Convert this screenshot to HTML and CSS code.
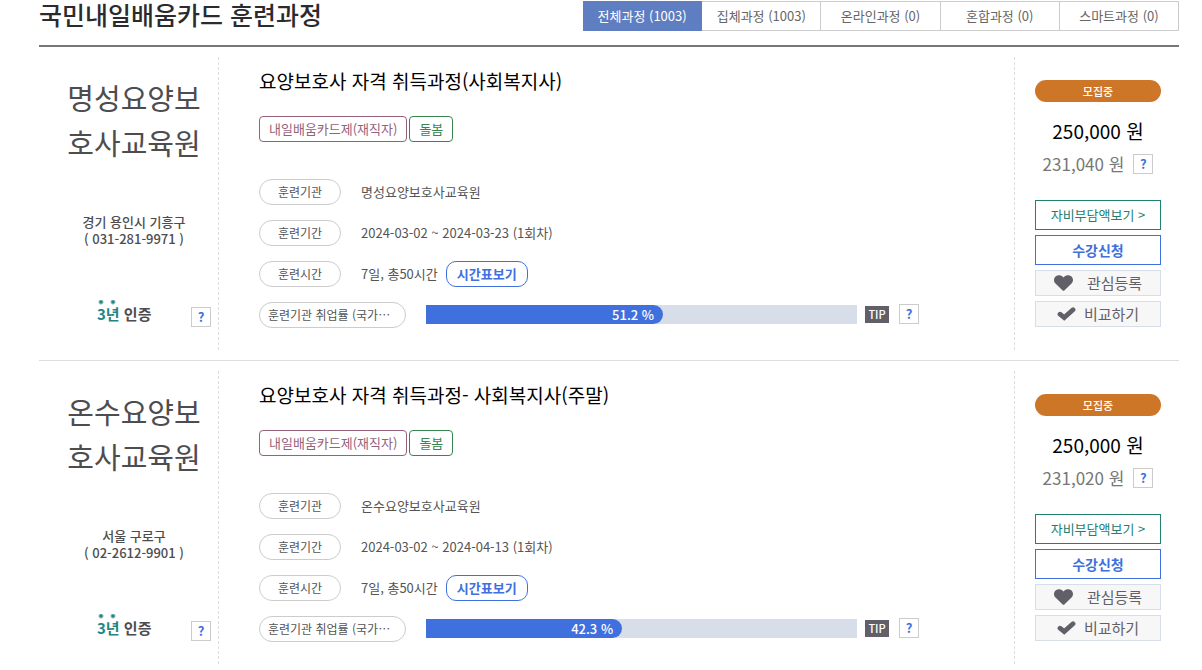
FILE: index.html
```html
<!DOCTYPE html>
<html lang="ko">
<head>
<meta charset="utf-8">
<meta name="viewport" content="width=device-width, initial-scale=1">
<title>국민내일배움카드 훈련과정</title>
<link rel="stylesheet" href="styles.css">
</head>
<body>
<svg class="sprite" aria-hidden="true">
  <symbol id="heart" viewBox="0 24 512 464" preserveAspectRatio="none"><path d="M462.3 62.6C407.5 15.9 326 24.3 275.7 76.2L256 96.5l-19.7-20.3C186.1 24.3 104.5 15.9 49.7 62.6c-62.8 53.6-66.1 149.8-9.9 207.9l193.5 199.8c12.5 12.9 32.8 12.9 45.3 0l193.5-199.8c56.3-58.1 53-154.3-9.8-207.9z"/></symbol>
  <symbol id="check" viewBox="0 0 19 14"><path d="M3 7.2L7.2 10.6L16 2.8" fill="none" stroke="#616068" stroke-width="4.8" stroke-linecap="round" stroke-linejoin="miter"/></symbol>
</svg>
<main class="page">
  <header class="page-head">
    <h1 class="page-title">국민내일배움카드 훈련과정</h1>
    <nav class="tabs">
      <a class="tab tab-on" href="#">전체과정 (1003)</a>
      <a class="tab" href="#">집체과정 (1003)</a>
      <a class="tab" href="#">온라인과정 (0)</a>
      <a class="tab" href="#">혼합과정 (0)</a>
      <a class="tab" href="#">스마트과정 (0)</a>
    </nav>
  </header>

  <article class="course">
    <section class="school">
      <p class="school-name">명성요양보호사교육원</p>
      <p class="school-place">경기 용인시 기흥구<br>( 031-281-9971 )</p>
      <div class="cert">
        <p class="cert-text"><span class="cert-years">3년</span> 인증</p>
        <button class="help" type="button">?</button>
      </div>
    </section>
    <section class="detail">
      <h2 class="course-title"><a href="#">요양보호사 자격 취득과정(사회복지사)</a></h2>
      <div class="tags"><span class="tag tag-card">내일배움카드제(재직자)</span><span class="tag tag-care">돌봄</span></div>
      <dl class="facts">
        <div class="fact"><dt class="chip">훈련기관</dt><dd>명성요양보호사교육원</dd></div>
        <div class="fact"><dt class="chip">훈련기간</dt><dd>2024-03-02 ~ 2024-03-23 (1회차)</dd></div>
        <div class="fact"><dt class="chip">훈련시간</dt><dd>7일, 총50시간</dd><dd><button class="timetable" type="button">시간표보기</button></dd></div>
        <div class="fact"><dt class="chip chip-wide">훈련기관 취업률 (국가…</dt>
          <dd class="rate"><div class="bar"><div class="bar-fill" style="width:55%">51.2 %</div></div><span class="tip">TIP</span><button class="help" type="button">?</button></dd></div>
      </dl>
    </section>
    <section class="apply">
      <span class="status">모집중</span>
      <p class="price">250,000 원</p>
      <p class="own-price">231,040 원 <button class="help" type="button">?</button></p>
      <div class="actions">
        <button class="action action-cost" type="button">자비부담액보기 &gt;</button>
        <button class="action action-apply" type="button">수강신청</button>
        <button class="action action-sub" type="button"><svg class="icon-heart"><use href="#heart"/></svg>관심등록</button>
        <button class="action action-sub" type="button"><svg class="icon-check"><use href="#check"/></svg>비교하기</button>
      </div>
    </section>
  </article>

  <article class="course">
    <section class="school">
      <p class="school-name">온수요양보호사교육원</p>
      <p class="school-place">서울 구로구<br>( 02-2612-9901 )</p>
      <div class="cert">
        <p class="cert-text"><span class="cert-years">3년</span> 인증</p>
        <button class="help" type="button">?</button>
      </div>
    </section>
    <section class="detail">
      <h2 class="course-title"><a href="#">요양보호사 자격 취득과정- 사회복지사(주말)</a></h2>
      <div class="tags"><span class="tag tag-card">내일배움카드제(재직자)</span><span class="tag tag-care">돌봄</span></div>
      <dl class="facts">
        <div class="fact"><dt class="chip">훈련기관</dt><dd>온수요양보호사교육원</dd></div>
        <div class="fact"><dt class="chip">훈련기간</dt><dd>2024-03-02 ~ 2024-04-13 (1회차)</dd></div>
        <div class="fact"><dt class="chip">훈련시간</dt><dd>7일, 총50시간</dd><dd><button class="timetable" type="button">시간표보기</button></dd></div>
        <div class="fact"><dt class="chip chip-wide">훈련기관 취업률 (국가…</dt>
          <dd class="rate"><div class="bar"><div class="bar-fill" style="width:45.5%">42.3 %</div></div><span class="tip">TIP</span><button class="help" type="button">?</button></dd></div>
      </dl>
    </section>
    <section class="apply">
      <span class="status">모집중</span>
      <p class="price">250,000 원</p>
      <p class="own-price">231,020 원 <button class="help" type="button">?</button></p>
      <div class="actions">
        <button class="action action-cost" type="button">자비부담액보기 &gt;</button>
        <button class="action action-apply" type="button">수강신청</button>
        <button class="action action-sub" type="button"><svg class="icon-heart"><use href="#heart"/></svg>관심등록</button>
        <button class="action action-sub" type="button"><svg class="icon-check"><use href="#check"/></svg>비교하기</button>
      </div>
    </section>
  </article>
</main>
</body>
</html>
```

FILE: styles.css
```css
* {
  box-sizing: border-box;
  margin: 0;
  padding: 0;
}

body {
  background: #fff;
  color: #555;
  font: 400 13px/16px "Noto Sans CJK KR", "Noto Sans", sans-serif;
}

button {
  font: inherit;
  cursor: pointer;
}

a {
  color: inherit;
  text-decoration: none;
}

.sprite {
  display: none;
}

.page {
  padding: 0 23px 0 39px;
}

.page-head {
  display: flex;
  justify-content: space-between;
  align-items: flex-start;
  padding: 1px 0 14px;
  border-bottom: 2px solid #777;
}

.page-title {
  color: #2b2b2f;
  font-size: 25px;
  font-weight: 500;
  line-height: 26px;
}

.tabs {
  display: flex;
  width: 596px;
}

.tab {
  flex: 1;
  border: 1px solid #ccc;
  border-left-width: 0;
  color: #666;
  line-height: 28px;
  text-align: center;
  white-space: nowrap;
}

.tab-on {
  border-color: #5f7dc1;
  background: #5f7dc1;
  color: #fff;
}

/* Course row: school, details, price */
.course {
  display: grid;
  grid-template-columns: 180px 1fr 165px;
  padding: 10px 0;
  border-bottom: 1px solid #ddd;
}

.course:last-child {
  padding-bottom: 0;
  border-bottom: 0;
}

.school {
  display: flex;
  flex-direction: column;
  padding: 18px 7px 23px 18px;
  border-right: 1px dashed #ddd;
  text-align: center;
}

.school-name {
  color: #4d4d4f;
  font-size: 29px;
  line-height: 45px;
  word-break: break-all;
}

.school-place {
  margin-top: 48px;
  color: #4d4d4f;
  font-weight: 500;
  line-height: 17px;
}

.cert {
  display: flex;
  justify-content: space-between;
  align-items: flex-end;
  margin-top: auto;
  padding-left: 40px;
}

.cert-text {
  padding-bottom: 1px;
  color: #4d4d4f;
  font-size: 15px;
  font-weight: 700;
  line-height: 24px;
}

/* Two accent dots above the years */
.cert-years {
  padding-top: 3px;
  background:
    radial-gradient(circle at 4px 2px, #238580 0 1px, transparent 3px),
    radial-gradient(circle at 16px 2px, #238580 0 1px, transparent 3px);
  background-repeat: no-repeat;
  background-size: 100% 5px;
  color: #238580;
}

.help {
  flex: none;
  width: 20px;
  height: 20px;
  border: 1px solid #ccc;
  background: #fff;
  color: #4070dd;
  font-size: 13px;
  font-weight: 700;
  line-height: 18px;
}

.detail {
  min-width: 0;
  padding: 10px 20px 0 40px;
}

.course-title {
  color: #000;
  font-size: 19px;
  font-weight: 400;
  line-height: 28px;
}

.tags {
  display: flex;
  gap: 2px;
  margin-top: 21px;
}

.tag {
  padding: 0 9px;
  border: 1px solid;
  border-radius: 4px;
  line-height: 24px;
}

.tag-card {
  color: #96617a;
}

.tag-care {
  color: #38864f;
}

.facts {
  display: grid;
  gap: 15px;
  margin-top: 37px;
}

.fact {
  display: flex;
  align-items: center;
  gap: 8px;
}

.chip {
  flex: none;
  width: 82px;
  margin-right: 12px;
  border: 1px solid #ccc;
  border-radius: 13px;
  font-size: 12px;
  line-height: 24px;
  text-align: center;
  white-space: nowrap;
}

.chip-wide {
  width: 147px;
  padding-left: 8px;
  text-align: left;
}

.timetable {
  display: block;
  width: 82px;
  border: 1px solid #4070dd;
  border-radius: 10px;
  background: #fff;
  color: #4070dd;
  font-weight: 700;
  line-height: 24px;
}

.rate {
  display: flex;
  flex: 1;
  align-items: center;
  padding-bottom: 2px;
}

.bar {
  flex: 0 1 431px;
  background: #d8dee9;
}

.bar-fill {
  padding-right: 9px;
  border-radius: 0 10px 10px 0;
  background: #4070dd;
  color: #fff;
  font-weight: 500;
  line-height: 19px;
  text-align: right;
}

.tip {
  width: 24px;
  margin: 0 10px 0 8px;
  background: #616068;
  color: #fff;
  font-size: 11px;
  font-weight: 500;
  line-height: 17px;
  text-align: center;
}

.apply {
  padding: 23px 18px 23px 20px;
  border-left: 1px dashed #ddd;
}

.status {
  display: block;
  border-radius: 11px;
  background: #ce7628;
  color: #fff;
  font-size: 11px;
  font-weight: 500;
  line-height: 22px;
  text-align: center;
}

.price {
  margin-top: 15px;
  color: #000;
  font-size: 19px;
  font-weight: 400;
  line-height: 28px;
  text-align: center;
}

.own-price {
  display: flex;
  justify-content: center;
  gap: 9px;
  margin-top: 9px;
  color: #777;
  font-size: 17px;
  line-height: 20px;
}

.actions {
  display: grid;
  gap: 5px;
  margin-top: 26px;
}

.action {
  display: flex;
  justify-content: center;
  align-items: center;
  border: 1px solid;
  background: #fff;
  line-height: 28px;
  white-space: nowrap;
}

.action-cost {
  color: #238070;
}

.action-apply {
  color: #4070dd;
  font-size: 14px;
  font-weight: 700;
}

.action-sub {
  border-color: #d8dee9;
  background: #f7f7f7;
  color: #616068;
  font-size: 15px;
  line-height: 24px;
}

.icon-heart {
  width: 19px;
  height: 16px;
  margin-right: 14px;
  fill: #616068;
}

.icon-check {
  width: 19px;
  height: 14px;
  margin-right: 8px;
}
```
